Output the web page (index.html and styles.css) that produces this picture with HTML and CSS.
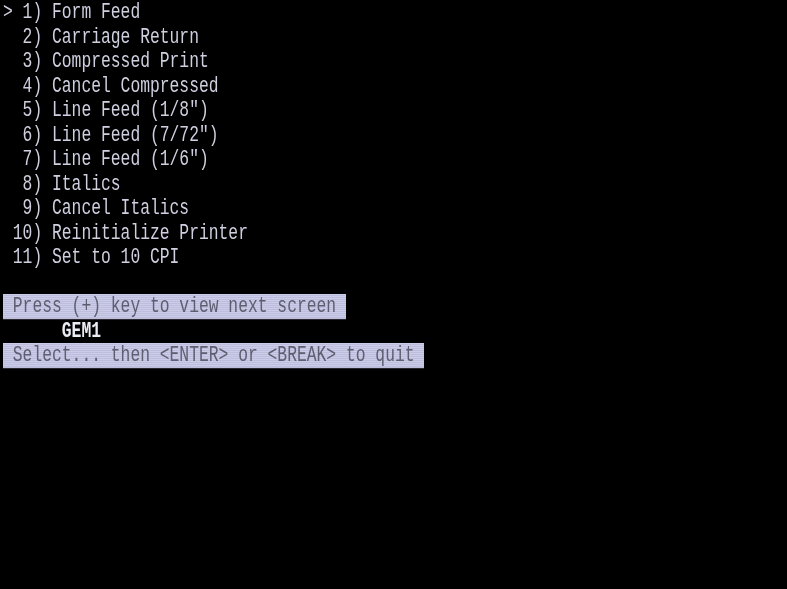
FILE: index.html
```html
<!DOCTYPE html>
<html>
<head>
<meta charset="utf-8">
<link rel="stylesheet" href="styles.css">
</head>
<body>
<div class="screen">
<div class="line">&gt; 1) Form Feed</div>
<div class="line">  2) Carriage Return</div>
<div class="line">  3) Compressed Print</div>
<div class="line">  4) Cancel Compressed</div>
<div class="line">  5) Line Feed (1/8")</div>
<div class="line">  6) Line Feed (7/72")</div>
<div class="line">  7) Line Feed (1/6")</div>
<div class="line">  8) Italics</div>
<div class="line">  9) Cancel Italics</div>
<div class="line"> 10) Reinitialize Printer</div>
<div class="line"> 11) Set to 10 CPI</div>
<div class="line"> </div>
<div class="line"><span class="bar"> Press (+) key to view next screen </span></div>
<div class="line">      <span class="name">GEM1</span></div>
<div class="line"><span class="bar"> Select... then &lt;ENTER&gt; or &lt;BREAK&gt; to quit </span></div>
</div>
</body>
</html>
```
FILE: styles.css
```css
html, body {
  margin: 0;
  padding: 0;
  background: #000;
  width: 787px;
  height: 589px;
  overflow: hidden;
}
.screen {
  padding-left: 3px;
  font-family: "Liberation Mono", "DejaVu Sans Mono", monospace;
  font-size: 16.333px;
  line-height: 17.5px;
  color: #cfcfe0;
  transform: scaleY(1.4);
  transform-origin: top left;
  filter: blur(0.35px);
}
.line {
  white-space: pre;
  height: 17.5px;
}
.bar {
  display: inline-block;
  height: 17.5px;
  background: repeating-linear-gradient(to bottom, #cbcbea 0, #cbcbea 0.7px, #bdbddc 0.7px, #bdbddc 1.4px);
  color: #5e5e70;
}
.name {
  color: #ececf4;
  font-weight: bold;
}
```
